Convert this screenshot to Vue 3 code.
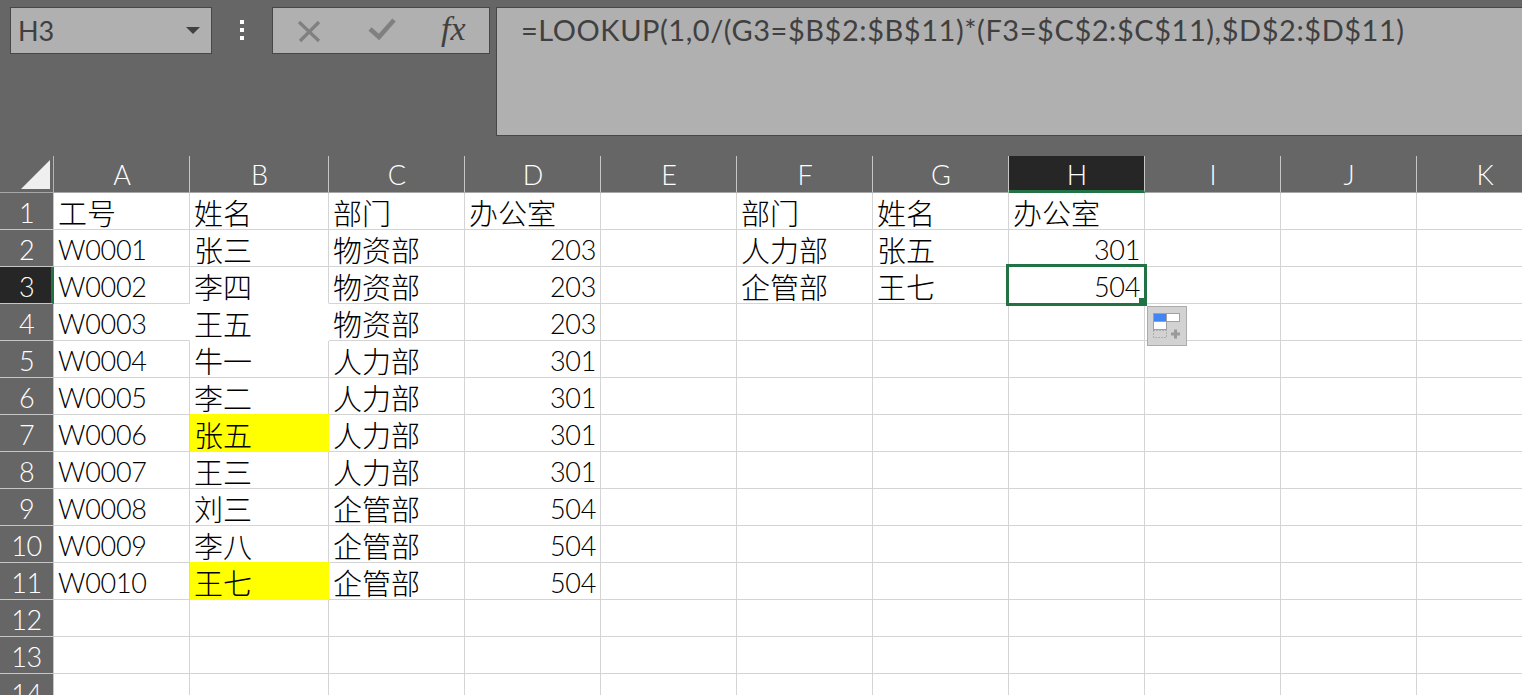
<script setup>
const columns = ['A', 'B', 'C', 'D', 'E', 'F', 'G', 'H', 'I', 'J', 'K']
const left = {
  1: ['工号', '姓名', '部门', '办公室'],
  2: ['W0001', '张三', '物资部', 203],
  3: ['W0002', '李四', '物资部', 203],
  4: ['W0003', '王五', '物资部', 203],
  5: ['W0004', '牛一', '人力部', 301],
  6: ['W0005', '李二', '人力部', 301],
  7: ['W0006', '张五', '人力部', 301],
  8: ['W0007', '王三', '人力部', 301],
  9: ['W0008', '刘三', '企管部', 504],
  10: ['W0009', '李八', '企管部', 504],
  11: ['W0010', '王七', '企管部', 504]
}
const right = {
  1: ['部门', '姓名', '办公室'],
  2: ['人力部', '张五', 301],
  3: ['企管部', '王七', 504]
}
const yellow = ['7-1', '11-1']
const noBottom = ['3-1', '4-1']
const noRight = ['4-0', '4-1']

function valueAt(r, c) {
  if (c <= 3) return left[r]?.[c] ?? ''
  if (c >= 5 && c <= 7) return right[r]?.[c - 5] ?? ''
  return ''
}
function kind(v) {
  if (typeof v === 'number') return 'num'
  return /^W/.test(v) ? 'latin' : 'cjk'
}
const rows = Array.from({ length: 14 }, (_, i) => {
  const r = i + 1
  return {
    r,
    cells: columns.map((_, c) => {
      const key = `${r}-${c}`
      const value = valueAt(r, c)
      const active = r === 3 && c === 7
      return {
        c,
        value,
        cls: [
          kind(value),
          yellow.includes(key) && 'yellow',
          noBottom.includes(key) && 'no-bottom',
          noRight.includes(key) && 'no-right',
          active && 'active'
        ],
        active
      }
    })
  }
})
</script>

<template>
  <div class="app">
    <div class="bar">
      <div class="box name-box">
        <span class="name">H3</span>
        <span class="caret"></span>
      </div>
      <div class="dots"><i></i><i></i><i></i></div>
      <div class="box buttons">
        <svg width="26" height="24" viewBox="0 0 26 24" class="ic-x">
          <path d="M3 3L23 22M23 3L4 22" fill="none" stroke="#808080" stroke-width="3.2" />
        </svg>
        <svg width="28" height="24" viewBox="0 0 28 24" class="ic-check">
          <path d="M2 12L11 20L26 3" fill="none" stroke="#808080" stroke-width="4.6" />
        </svg>
        <span class="fx">fx</span>
      </div>
      <div class="box formula">=LOOKUP(1,0/(G3=$B$2:$B$11)*(F3=$C$2:$C$11),$D$2:$D$11)</div>
    </div>

    <div class="sheet">
      <div class="row head-row">
        <div class="corner">
          <svg width="53" height="36" viewBox="0 0 53 36"><path d="M21 33L50 4V33Z" fill="#efefef" /></svg>
        </div>
        <div v-for="(col, i) in columns" :key="col" class="col-head" :class="{ selected: i === 7 }">{{ col }}</div>
      </div>
      <div v-for="row in rows" :key="row.r" class="row">
        <div class="row-head" :class="{ selected: row.r === 3 }">{{ row.r }}</div>
        <div v-for="cell in row.cells" :key="cell.c" class="cell" :class="cell.cls">
          {{ cell.value }}
          <template v-if="cell.active">
            <div class="cursor"><span class="handle"></span></div>
            <div class="paste">
              <svg width="38" height="38" viewBox="0 0 38 38">
                <rect x="5.5" y="6.5" width="13" height="8" fill="#4285f4" stroke="#a0a0a0" />
                <rect x="18.5" y="6.5" width="13" height="8" fill="#fff" stroke="#a0a0a0" />
                <rect x="5.5" y="14.5" width="13" height="8" fill="#fff" stroke="#a0a0a0" />
                <rect x="5.5" y="23.5" width="13" height="7" fill="none" stroke="#8c8c8c" stroke-dasharray="1 2" />
                <path d="M23 27H32M27.5 22.5V31.5" stroke="#9a9a9a" stroke-width="3" fill="none" />
              </svg>
            </div>
          </template>
        </div>
      </div>
    </div>
  </div>
</template>

<style scoped>
.app {
  width: 1522px;
  height: 695px;
  overflow: hidden;
  background: #666;
  font-family: "Lato", "Noto Sans CJK SC", sans-serif;
  color: #000;
}
.bar {
  display: flex;
  align-items: flex-start;
  height: 156px;
  padding: 7px 0 0 10px;
  box-sizing: border-box;
}
.box {
  box-sizing: border-box;
  flex: none;
  height: 47px;
  background: #b0b0b0;
  border: 1px solid #474747;
  color: #404040;
}
.name-box {
  width: 202px;
  display: flex;
  align-items: center;
  justify-content: space-between;
  padding: 0 11px 0 7px;
}
.name {
  font-size: 27px;
  line-height: 44px;
}
.caret {
  width: 0;
  height: 0;
  border-left: 7px solid transparent;
  border-right: 7px solid transparent;
  border-top: 7px solid #404040;
}
.dots {
  flex: none;
  width: 60px;
  display: flex;
  flex-direction: column;
  align-items: center;
  gap: 4px;
  padding-top: 13px;
}
.dots i {
  width: 4px;
  height: 4px;
  background: #fff;
}
.buttons {
  width: 218px;
  display: flex;
  align-items: center;
}
.ic-x {
  margin-left: 23px;
}
.ic-check {
  margin-left: 46px;
  margin-top: -3px;
}
.fx {
  margin-left: 45px;
  font-family: "Liberation Serif", serif;
  font-style: italic;
  font-size: 34px;
  line-height: 40px;
  color: #404040;
  margin-top: -3px;
}
.formula {
  width: 1040px;
  height: 129px;
  margin-left: 6px;
  padding: 2px 0 0 24px;
  font-size: 29px;
  line-height: 40px;
  letter-spacing: 0.55px;
  white-space: nowrap;
}
.sheet {
  display: flex;
  flex-direction: column;
}
.row {
  display: grid;
  grid-template-columns: 54px 136px 139px repeat(9, 136px);
  height: 37px;
}
.corner {
  height: 37px;
  box-sizing: border-box;
  border-right: 1px solid #b4b4b4;
  border-bottom: 1px solid #a6a6a6;
}
.corner svg {
  display: block;
}
.col-head {
  box-sizing: border-box;
  height: 37px;
  padding: 2px 0 0 1px;
  border-right: 1px solid #c6c6c6;
  border-bottom: 1px solid #a6a6a6;
  color: #fff;
  text-align: center;
  font-size: 27px;
  font-weight: 300;
  line-height: 34px;
}
.col-head.selected {
  background: #262626;
  border-bottom: 3px solid #217346;
}
.row-head {
  box-sizing: border-box;
  height: 37px;
  padding-top: 2px;
  border-right: 1px solid #c6c6c6;
  border-bottom: 1px solid #c6c6c6;
  color: #fff;
  text-align: center;
  font-size: 27px;
  font-weight: 300;
  letter-spacing: -0.5px;
  line-height: 35px;
}
.row-head.selected {
  background: #262626;
  border-right: 3px solid #217346;
  padding-left: 2px;
}
.cell {
  position: relative;
  box-sizing: border-box;
  height: 37px;
  padding-top: 1px;
  background: #fff;
  border-right: 1px solid #d4d4d4;
  border-bottom: 1px solid #d4d4d4;
  white-space: nowrap;
  line-height: 36px;
}
.latin {
  font-size: 27px;
  font-weight: 300;
  letter-spacing: -0.3px;
  padding: 2px 0 0 4px;
  line-height: 35px;
}
.num {
  font-size: 27px;
  font-weight: 300;
  letter-spacing: -0.3px;
  text-align: right;
  padding: 2px 4px 0 0;
  line-height: 35px;
}
.cjk {
  font-family: "Noto Sans CJK SC", sans-serif;
  font-weight: 300;
  font-size: 29px;
  padding-left: 4px;
}
.yellow {
  background: #ff0;
  margin-top: -1px;
  height: 38px;
  padding-top: 2px;
  margin-right: -1px;
  border-color: #ff0;
}
.no-bottom {
  border-bottom-color: #fff;
}
.no-right {
  border-right-color: #fff;
}
.active {
  z-index: 2;
}
.cursor {
  position: absolute;
  left: -3px;
  top: -3px;
  width: 141px;
  height: 42px;
  box-sizing: border-box;
  border: 3px solid #217346;
}
.handle {
  position: absolute;
  right: -3px;
  bottom: -3px;
  width: 8px;
  height: 8px;
  background: #217346;
}
.paste {
  position: absolute;
  left: 138px;
  top: 39px;
  width: 40px;
  height: 40px;
  box-sizing: border-box;
  background: #d2d2d2;
  border: 1px solid #ababab;
}
.paste svg {
  display: block;
}
</style>
